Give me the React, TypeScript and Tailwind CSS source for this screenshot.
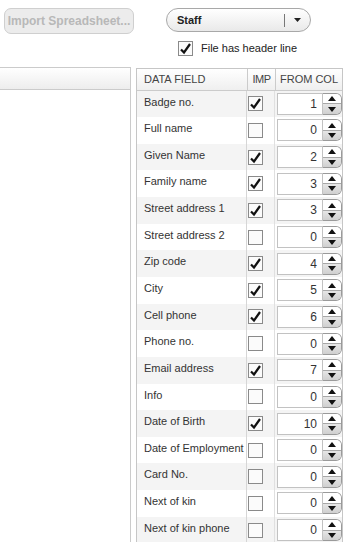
import React from 'react';

type Row = [string, boolean, number];

const rows: Row[] = [
  ['Badge no.', true, 1],
  ['Full name', false, 0],
  ['Given Name', true, 2],
  ['Family name', true, 3],
  ['Street address 1', true, 3],
  ['Street address 2', false, 0],
  ['Zip code', true, 4],
  ['City', true, 5],
  ['Cell phone', true, 6],
  ['Phone no.', false, 0],
  ['Email address', true, 7],
  ['Info', false, 0],
  ['Date of Birth', true, 10],
  ['Date of Employment', false, 0],
  ['Card No.', false, 0],
  ['Next of kin', false, 0],
  ['Next of kin phone', false, 0],
];

const Check: React.FC<{ on: boolean }> = ({ on }) => (
  <div className="w-[15px] h-[15px] border border-[#8a8a8a] bg-[#fbfbfb] flex items-center justify-center shrink-0">
    {on && (
      <svg width="13" height="13" viewBox="0 0 13 13">
        <path d="M2 7.5 L5 10.5 L11 2" fill="none" stroke="#111" strokeWidth="2.2" strokeLinejoin="miter" />
      </svg>
    )}
  </div>
);

const Spinner: React.FC<{ value: number }> = ({ value }) => (
  <div className="flex h-[22px] ml-[2px]">
    <div className="w-[46px] h-full border border-[#c2c2c2] bg-white flex items-center justify-end pr-[5px] text-[12px] text-[#333]">
      {value}
    </div>
    <div className="w-[19px] h-full border border-l-0 border-[#9a9a9a] rounded-r-[6px] overflow-hidden flex flex-col">
      <div className="flex-1 bg-white flex items-center justify-center">
        <svg width="8" height="5" viewBox="0 0 8 5"><path d="M0 5 L4 0 L8 5 Z" fill="#111" /></svg>
      </div>
      <div className="flex-1 bg-gradient-to-b from-[#e6e6e6] to-[#cfcfcf] border-t border-[#a8a8a8] flex items-center justify-center">
        <svg width="8" height="5" viewBox="0 0 8 5"><path d="M0 0 L8 0 L4 5 Z" fill="#111" /></svg>
      </div>
    </div>
  </div>
);

export default function App() {
  return (
    <div className="w-[348px] h-[542px] overflow-hidden bg-white text-[#333] font-['Liberation_Sans',Arial,sans-serif] text-[11px]">
      {/* toolbar */}
      <div className="flex items-start pt-[8px]">
        <div className="ml-[4px] w-[130px] h-[26px] rounded-[7px] border border-[#cfcfcf] bg-[#ececec] flex items-center justify-center text-[12px] font-bold text-[#b8b8b8]">
          Import Spreadsheet...
        </div>
        <div className="ml-[32px] w-[145px] h-[24px] rounded-full border border-[#a8a8a8] bg-gradient-to-b from-white to-[#e9e9e9] flex items-center">
          <span className="pl-[10px] flex-1 font-bold text-[11px] text-[#222]">Staff</span>
          <div className="w-px h-[13px] bg-[#777]" />
          <svg className="mx-[9px]" width="7" height="4" viewBox="0 0 7 4"><path d="M0 0 L7 0 L3.5 4 Z" fill="#222" /></svg>
        </div>
      </div>
      <div className="flex items-center ml-[178px] mt-[6px] gap-[8px]">
        <Check on />
        <span className="text-[11px] text-[#222]">File has header line</span>
      </div>

      {/* main */}
      <div className="flex mt-[10px] gap-[5px]">
        <div className="w-[131px] h-[480px] border border-l-0 border-[#cbcbcb]">
          <div className="h-[22px] border-b border-[#cbcbcb] bg-gradient-to-b from-white to-[#ededed]" />
        </div>
        <div className="w-[207px] mt-[1px] border border-[#c6c6c6] self-start">
          <div className="flex h-[22px] border-b border-[#cbcbcb] bg-gradient-to-b from-white to-[#efefef] text-[11px] text-[#444]">
            <div className="w-[110px] pl-[7px] flex items-center">DATA FIELD</div>
            <div className="w-[28px] border-l border-[#cbcbcb] flex items-center justify-center tracking-[-0.5px]">IMP</div>
            <div className="flex-1 border-l border-[#cbcbcb] flex items-center justify-center">FROM COL</div>
          </div>
          {rows.map(([label, on, val], i) => (
            <div key={i} className={`flex h-[26.65px] ${i % 2 === 0 ? 'bg-[#f4f4f4]' : 'bg-white'}`}>
              <div className="w-[110px] pl-[7px] pt-[3px] text-[11px] text-[#333] whitespace-nowrap">{label}</div>
              <div className="w-[28px] border-l border-[#d6d6d6] flex items-center pl-[1px]">
                <Check on={on} />
              </div>
              <div className="flex-1 border-l border-[#e0e0e0] flex items-center">
                <Spinner value={val} />
              </div>
            </div>
          ))}
        </div>
      </div>
    </div>
  );
}
